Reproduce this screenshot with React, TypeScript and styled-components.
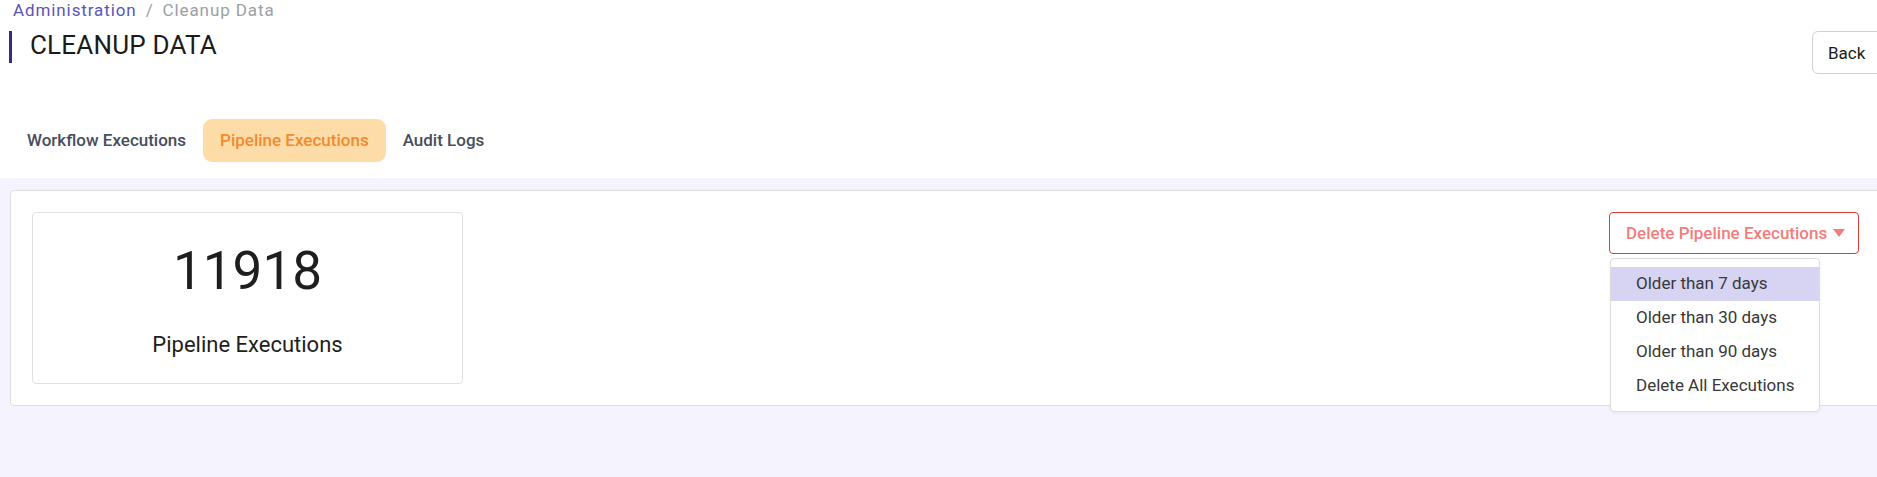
import React from "react";
import styled, { createGlobalStyle } from "styled-components";

const GlobalStyle = createGlobalStyle`
  html, body {
    margin: 0;
    padding: 0;
    overflow: hidden;
    background: #ffffff;
    font-family: Roboto, "Noto Sans", Arial, sans-serif;
  }
`;

const Page = styled.div`
  width: 1891px;
  height: 477px;
  display: flex;
  flex-direction: column;
`;

const Header = styled.header`
  padding: 0 5px 0 9px;
`;

const Breadcrumb = styled.nav`
  height: 20px;
  line-height: 20px;
  font-size: 17px;
  letter-spacing: 0.9px;
  display: flex;
  gap: 9px;
  padding-left: 4px;
`;

const Crumb = styled.span<{ $link?: boolean }>`
  color: ${(p) => (p.$link ? "#5b55b9" : "#9aa0a6")};
`;

const TitleRow = styled.div`
  margin-top: 11px;
  display: flex;
  justify-content: space-between;
  align-items: flex-start;
`;

const Title = styled.h1`
  margin: 0;
  height: 32px;
  border-left: 3px solid #3a2a85;
  padding-left: 18px;
  font-size: 26px;
  letter-spacing: 0.2px;
  line-height: 28px;
  font-weight: 400;
  color: #1b1b1b;
`;

const BackButton = styled.button`
  width: 74px;
  height: 43px;
  border: 1px solid #cdd1d6;
  border-radius: 6px;
  background: #fff;
  font-family: inherit;
  font-size: 17px;
  color: #1b1b1b;
  text-align: left;
  padding: 0 0 0 15px;
`;

const Tabs = styled.div`
  margin-top: 45px;
  display: flex;
  padding-left: 1px;
`;

const Tab = styled.div<{ $active?: boolean }>`
  height: 43px;
  line-height: 43px;
  padding: 0 17px;
  border-radius: 9px;
  font-size: 17px;
  font-weight: 500;
  color: ${(p) => (p.$active ? "#f28a2e" : "#474e5b")};
  background: ${(p) => (p.$active ? "#fedca8" : "transparent")};
`;

const Content = styled.main`
  margin-top: 16px;
  flex: 1;
  background: #f5f4fe;
  padding: 12px 0 0 10px;
`;

const Panel = styled.section`
  box-sizing: border-box;
  width: 1871px;
  height: 216px;
  background: #fff;
  border: 1px solid #dedede;
  border-radius: 4px;
  padding: 21px;
  display: flex;
  justify-content: space-between;
  align-items: flex-start;
`;

const StatCard = styled.div`
  box-sizing: border-box;
  width: 431px;
  height: 172px;
  border: 1px solid #e0e0e0;
  border-radius: 4px;
  display: flex;
  flex-direction: column;
  align-items: center;
  padding-top: 32px;
`;

const StatNumber = styled.div`
  font-size: 53px;
  line-height: 53px;
  color: #1e1e1e;
`;

const StatLabel = styled.div`
  margin-top: 35px;
  font-size: 22px;
  line-height: 24px;
  color: #1e1e1e;
`;

const DropdownWrap = styled.div`
  position: relative;
`;

const DeleteButton = styled.button`
  box-sizing: border-box;
  width: 250px;
  height: 42px;
  border: 1px solid #e53935;
  border-radius: 4px;
  background: #fff;
  font-family: inherit;
  font-size: 17px;
  font-weight: 500;
  color: #f47c7c;
  display: flex;
  align-items: center;
  padding: 0 0 0 16px;
  gap: 6px;
`;

const Caret = styled.span`
  width: 0;
  height: 0;
  border-left: 6px solid transparent;
  border-right: 6px solid transparent;
  border-top: 8px solid #f47c7c;
`;

const Menu = styled.ul`
  position: absolute;
  top: 46px;
  left: 1px;
  box-sizing: border-box;
  width: 210px;
  margin: 0;
  padding: 8px 0;
  list-style: none;
  background: #fff;
  border: 1px solid #dcdcdc;
  border-radius: 4px;
  box-shadow: 0 1px 3px rgba(0, 0, 0, 0.06);
`;

const MenuItem = styled.li<{ $active?: boolean }>`
  height: 34px;
  line-height: 33px;
  padding-left: 25px;
  font-size: 17px;
  color: #383838;
  background: ${(p) => (p.$active ? "#d6d3f3" : "transparent")};
`;

const options = [
  "Older than 7 days",
  "Older than 30 days",
  "Older than 90 days",
  "Delete All Executions",
];

export default function App() {
  return (
    <Page>
      <GlobalStyle />
      <Header>
        <Breadcrumb>
          <Crumb $link>Administration</Crumb>
          <Crumb>/</Crumb>
          <Crumb>Cleanup Data</Crumb>
        </Breadcrumb>
        <TitleRow>
          <Title>CLEANUP DATA</Title>
          <BackButton>Back</BackButton>
        </TitleRow>
        <Tabs>
          <Tab>Workflow Executions</Tab>
          <Tab $active>Pipeline Executions</Tab>
          <Tab>Audit Logs</Tab>
        </Tabs>
      </Header>
      <Content>
        <Panel>
          <StatCard>
            <StatNumber>11918</StatNumber>
            <StatLabel>Pipeline Executions</StatLabel>
          </StatCard>
          <DropdownWrap>
            <DeleteButton>
              Delete Pipeline Executions
              <Caret />
            </DeleteButton>
            <Menu>
              {options.map((o, i) => (
                <MenuItem key={o} $active={i === 0}>
                  {o}
                </MenuItem>
              ))}
            </Menu>
          </DropdownWrap>
        </Panel>
      </Content>
    </Page>
  );
}
